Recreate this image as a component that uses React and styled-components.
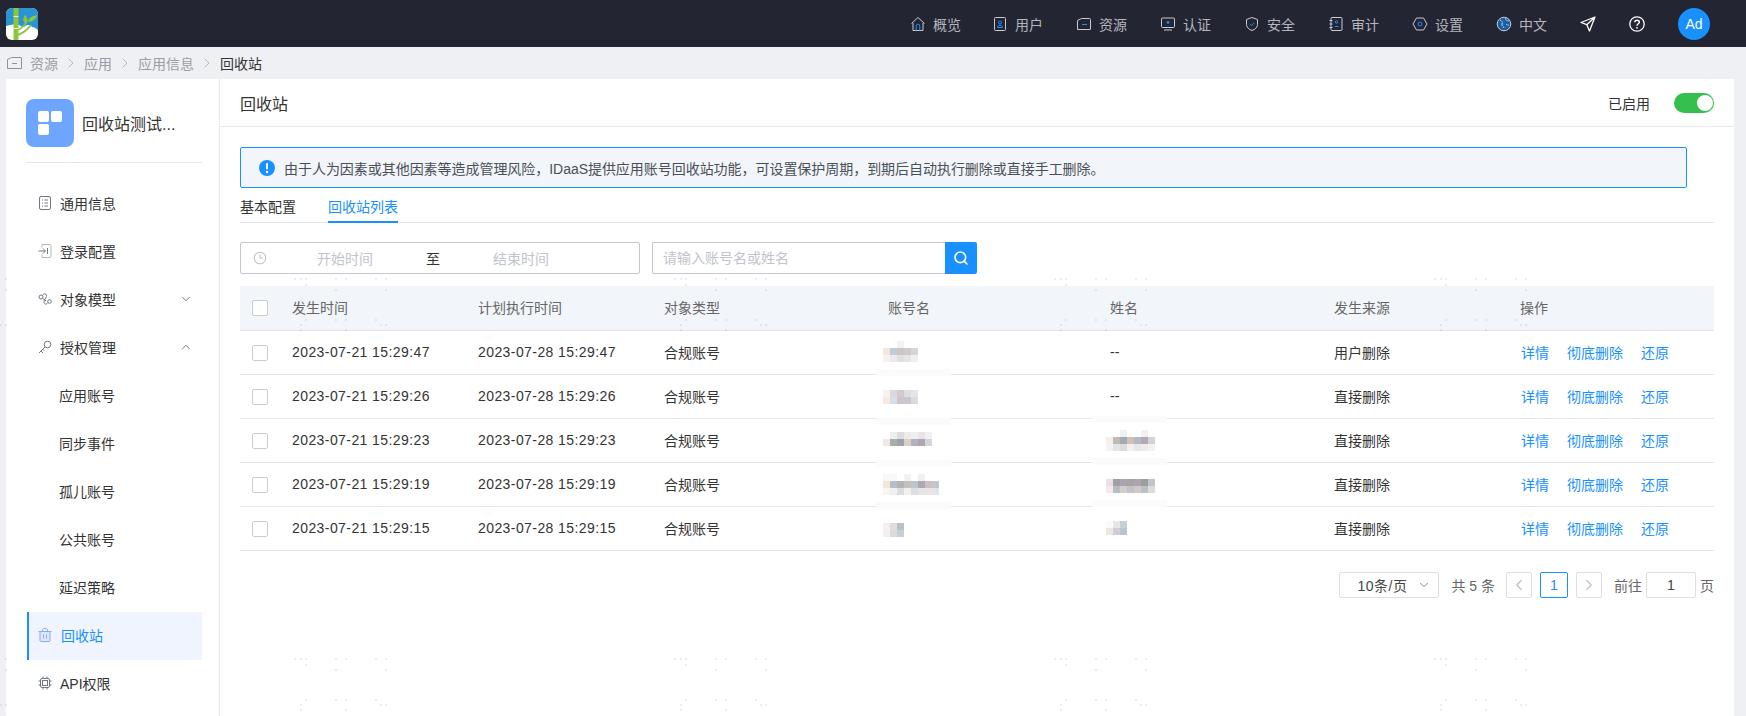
import React from 'react';
import styled, { createGlobalStyle } from 'styled-components';
import { ChevronDown, ChevronUp, ChevronLeft, ChevronRight, ChevronRight as Sep, Search } from 'lucide-react';

const GlobalStyle = createGlobalStyle`
  html, body { margin: 0; padding: 0; height: 716px; overflow: hidden; background: #eff0f4; }
  body, input { font-family: "Liberation Sans", "Noto Sans CJK SC", sans-serif; font-size: 14px; color: #333; }
  * { box-sizing: border-box; }
`;

const BLUE = '#1890ff';

const Page = styled.div`
  position: relative;
  display: flex;
  flex-direction: column;
  width: 1746px;
  height: 716px;
  overflow: hidden;
`;

const TopBar = styled.header`
  flex: none;
  display: flex;
  align-items: center;
  height: 47px;
  padding: 0 36px 0 6px;
  background: #232533;
`;

const Nav = styled.nav`
  display: flex;
  align-items: center;
  gap: 33px;
  margin-left: auto;
`;

const NavItem = styled.a`
  display: flex;
  align-items: center;
  gap: 7px;
  color: #b4b6bd;
  &:first-child { margin-right: -2px; }
  svg { display: block; flex: none; }
`;

const Avatar = styled.div`
  display: flex;
  align-items: center;
  justify-content: center;
  width: 32px;
  height: 32px;
  border-radius: 50%;
  background: ${BLUE};
  color: #fff;
  font-weight: 500;
`;

const Crumbs = styled.div`
  flex: none;
  display: flex;
  align-items: center;
  height: 32px;
  padding-left: 7px;
  color: #9a9ca3;
  svg { display: block; flex: none; }
`;

const Crumb = styled.span`
  margin: 0 5px 0 ${(p) => (p.$first ? 8 : 5)}px;
  color: ${(p) => (p.$current ? '#333' : '#9a9ca3')};
`;

const Main = styled.div`
  flex: 1;
  min-height: 0;
  display: flex;
  padding: 0 12px 0 6px;
`;

const Sidebar = styled.aside`
  flex: none;
  width: 214px;
  padding: 20px 17px 0 21px;
  background: #fff;
  border-right: 1px solid #e8e9ec;
`;

const AppRow = styled.div`
  display: flex;
  align-items: center;
  gap: 8px;
  height: 64px;
  margin-left: -1px;
  padding-bottom: 16px;
  border-bottom: 1px solid #e4e5e8;
  margin-bottom: 17px;
  font-size: 16px;
  color: #333;
  white-space: nowrap;
`;

const AppTile = styled.div`
  display: grid;
  grid-template-columns: 11px 11px;
  grid-auto-rows: 11px;
  gap: 2px;
  align-content: center;
  justify-content: center;
  flex: none;
  width: 48px;
  height: 48px;
  border-radius: 8px;
  background: #6ea6ff;
  i { background: #fff; border-radius: 2px; }
`;

const MenuItem = styled.div`
  display: flex;
  align-items: center;
  height: 48px;
  padding-left: ${(p) => (p.$sub ? 32 : p.$active ? 9 : 11)}px;
  padding-right: 9px;
  padding-bottom: 2px;
  gap: ${(p) => (p.$active ? 9 : 8)}px;
  color: ${(p) => (p.$active ? BLUE : '#333')};
  background: ${(p) => (p.$active ? '#eff4ff' : 'transparent')};
  border-left: ${(p) => (p.$active ? `2px solid ${BLUE}` : 'none')};
  svg { display: block; flex: none; }
`;

const MenuChevron = styled.span`
  margin-left: auto;
  color: #6b6f77;
  svg { display: block; }
`;

const Content = styled.main`
  flex: 1;
  min-width: 0;
  background: #fff;
`;

const PanelHead = styled.div`
  display: flex;
  align-items: center;
  height: 48px;
  padding: 0 20px;
  border-bottom: 1px solid #e8e9ec;
  font-size: 16px;
`;

const StatusLabel = styled.span`
  margin-left: auto;
  margin-right: 24px;
  font-size: 14px;
`;

const Toggle = styled.span`
  position: relative;
  width: 40px;
  height: 20px;
  border-radius: 10px;
  background: #34bf4e;
  &::after {
    content: '';
    position: absolute;
    top: 2px;
    right: 1px;
    width: 16px;
    height: 16px;
    border-radius: 50%;
    background: #fff;
  }
`;

const Body = styled.div`
  padding: 20px 20px 0;
`;

const Notice = styled.div`
  display: flex;
  align-items: center;
  gap: 9px;
  width: 1447px;
  height: 41px;
  padding-left: 18px;
  border: 1px solid ${BLUE};
  border-radius: 2px;
  background: #f2f6fb;
  color: #4a4f57;
  letter-spacing: -0.04px;
  svg { display: block; flex: none; }
`;

const Tabs = styled.div`
  display: flex;
  gap: 32px;
  height: 35px;
  border-bottom: 1px solid #e4e7ed;
`;

const Tab = styled.div`
  height: 35px;
  padding-top: 9px;
  line-height: 20px;
  color: ${(p) => (p.$active ? BLUE : '#333')};
  border-bottom: 2px solid ${(p) => (p.$active ? BLUE : 'transparent')};
`;

const Filters = styled.div`
  display: flex;
  gap: 12px;
  margin-top: 19px;
`;

const DateRange = styled.div`
  display: flex;
  align-items: center;
  width: 400px;
  height: 32px;
  padding-left: 12px;
  border: 1px solid #c4c6cc;
  border-radius: 2px;
  color: #c0c4cc;
  svg { display: block; flex: none; }
`;

const DateSlot = styled.span`
  margin-left: ${(p) => p.$ml}px;
`;

const DateTo = styled.span`
  margin-left: 53px;
  color: #333;
`;

const SearchBox = styled.div`
  display: flex;
  width: 325px;
  height: 32px;
`;

const SearchInput = styled.input`
  flex: 1;
  min-width: 0;
  padding: 0 10px;
  border: 1px solid #c4c6cc;
  border-right: none;
  border-radius: 2px 0 0 2px;
  outline: none;
  &::placeholder { color: #c0c4cc; opacity: 1; }
`;

const SearchButton = styled.button`
  display: flex;
  align-items: center;
  justify-content: center;
  width: 32px;
  padding: 0;
  border: none;
  border-radius: 0 2px 2px 0;
  background: ${BLUE};
  color: #fff;
`;

const COLUMNS = '52px 186px 186px 224px 222px 224px 186px 194px';

const TableHead = styled.div`
  display: grid;
  grid-template-columns: ${COLUMNS};
  align-items: center;
  height: 45px;
  margin-top: 12px;
  background: #f2f6fa;
  border-bottom: 1px solid #e1e4e9;
  color: #666;
`;

const TableRow = styled.div`
  display: grid;
  grid-template-columns: ${COLUMNS};
  align-items: center;
  height: 44px;
  border-bottom: 1px solid #e4e6ea;
`;

const Cell = styled.div`
  position: relative;
  min-width: 0;
  padding-bottom: 2px;
`;

const BlurCell = styled.div`
  position: relative;
  align-self: stretch;
  min-width: 0;
`;

const DateText = styled.span`
  letter-spacing: 0.42px;
`;

const CheckCell = styled.div`
  padding-left: 12px;
`;

const Check = styled.span`
  display: block;
  width: 16px;
  height: 16px;
  border: 1px solid #c8ccd3;
  border-radius: 2px;
  background: #fff;
`;

const Actions = styled.div`
  display: flex;
  gap: 18px;
  margin-left: 1px;
  padding-bottom: 2px;
`;

const ActionLink = styled.a`
  color: ${BLUE};
`;

const RedactionSvg = styled.svg`
  position: absolute;
  left: ${(p) => p.$left}px;
  top: 0;
  overflow: visible;
  pointer-events: none;
`;

const Pager = styled.div`
  display: flex;
  align-items: center;
  justify-content: flex-end;
  margin-top: 21px;
  height: 26px;
  color: #666;
`;

const PageSize = styled.div`
  display: flex;
  align-items: center;
  justify-content: space-between;
  width: 100px;
  height: 26px;
  padding: 0 7px 0 17px;
  border: 1px solid #dcdfe6;
  border-radius: 2px;
  color: #444;
  letter-spacing: 0.5px;
  margin-right: 12px;
  svg { display: block; color: #777; }
`;

const Total = styled.span`
  margin-right: 11px;
`;

const PageButton = styled.span`
  display: flex;
  align-items: center;
  justify-content: center;
  width: ${(p) => (p.$current ? 28 : 26)}px;
  height: 26px;
  margin: ${(p) => (p.$current ? '0 8px' : '0')};
  border: 1px solid ${(p) => (p.$current ? BLUE : '#dcdfe6')};
  border-radius: 2px;
  color: ${(p) => (p.$current ? BLUE : '#bcc0c8')};
`;

const GotoLabel = styled.span`
  margin-left: ${(p) => p.$ml}px;
`;

const GotoInput = styled.span`
  display: flex;
  align-items: center;
  justify-content: center;
  width: 50px;
  height: 26px;
  margin-left: 4px;
  border: 1px solid #dcdfe6;
  border-radius: 2px;
  color: #444;
`;

const Watermark = styled.svg`
  position: absolute;
  inset: 0;
  pointer-events: none;
`;

const Logo = () => (
  <svg width="32" height="32" viewBox="0 0 32 32">
    <defs>
      <clipPath id="logoClip"><rect width="32" height="32" rx="6" /></clipPath>
    </defs>
    <g clipPath="url(#logoClip)">
      <rect width="32" height="32" fill="#fff" />
      <path d="M0 0h32v22c-2-1-3-3-6-3-2-3-6-2-8 0-2 0-3-1-5-2-4-1-9 0-13 1z" fill="#2b93d1" />
      <rect x="7.5" y="0" width="5" height="32" fill="#8cc63f" />
      <path d="M7.5 8.5h5M7.5 20.5h5" stroke="#fff" strokeWidth=".8" />
      <path d="M12 27c5-2 10-6 13-10" stroke="#8cc63f" strokeWidth="2" fill="none" />
      <path d="M12 22c4-2 7-5 8-8" stroke="#8cc63f" strokeWidth="1.6" fill="none" />
      <path d="M19 15c-3-3-1-6-.5-8 3 2 4 5 2 9zM22 14c1-5 5-6 9-7-1 4-4 7-9 7z" fill="#8cc63f" />
    </g>
  </svg>
);

const Ico = ({ children, size = 16 }) => (
  <svg width={size} height={size} viewBox="0 0 16 16" fill="none" stroke="#c9cbd0" strokeWidth="1">
    {children}
  </svg>
);

const NAV = [
  ['概览', <Ico key="h"><path d="M1.5 7.5 8 1.5l6.5 6M3 7v7.5h10V7" /><path d="M6.2 14.5V10a1.8 1.8 0 0 1 3.6 0v4.5" stroke={BLUE} /></Ico>],
  ['用户', <Ico key="u"><rect x="2.5" y="1.5" width="11" height="13" rx="1" /><circle cx="8" cy="6.5" r="1.5" stroke={BLUE} /><path d="M5.5 11.5c0-3 5-3 5 0z" stroke={BLUE} /></Ico>],
  ['资源', <Ico key="r"><path d="M1.5 13.5v-9l4-2h8c.6 0 1 .4 1 1v9.5c0 .3-.3.5-.5.5z" /><path d="M6 8.5h5" stroke={BLUE} /></Ico>],
  ['认证', <Ico key="a"><rect x="1.5" y="2" width="13" height="9.5" rx="1" /><path d="M4 14h8" /><circle cx="8" cy="6.5" r="1.4" fill={BLUE} stroke="none" /></Ico>],
  ['安全', <Ico key="s"><path d="M8 1.5 13.5 3.5v5c0 3-2.5 5-5.5 6-3-1-5.5-3-5.5-6v-5z" /><path d="m5.8 8 1.7 1.6 2.8-2.8" stroke={BLUE} /></Ico>],
  ['审计', <Ico key="c"><rect x="3" y="1.5" width="11" height="13" rx="1" /><path d="M1.5 4.5h3M1.5 8h3M1.5 11.5h3" /><circle cx="8.5" cy="6" r="1.2" stroke={BLUE} /><path d="M6.8 10.5h3.5" stroke={BLUE} /></Ico>],
  ['设置', <Ico key="t"><path d="M4.5 2h7L15 8l-3.500 6h-7L1 8z" /><circle cx="8" cy="8" r="2" stroke={BLUE} /></Ico>],
  ['中文', <Ico key="g"><circle cx="8" cy="8" r="6.800" fill="#1a5f9e" /><path d="M4 4c2 1 3 2 2 4s2 2 2 4M10 2c-1 2 1 3 3 3M10 8c1 1 2 1 3 1" stroke="#9fd0f5" /></Ico>],
];

const SendIcon = () => (
  <svg width="16" height="16" viewBox="0 0 16 16" fill="none" stroke="#fff" strokeWidth="1.300" strokeLinejoin="round">
    <path d="M15 1 1 6.500l5.800 2.200L9.500 15zM6.800 8.700 15 1" />
  </svg>
);

const HelpIcon = () => (
  <svg width="16" height="16" viewBox="0 0 16 16" fill="none" stroke="#fff" strokeWidth="1.300">
    <circle cx="8" cy="8" r="7.200" />
    <path d="M5.800 6.200C5.800 3.500 10.300 3.600 10.300 6.200 10.300 7.800 8 7.700 8 9.800" strokeWidth="1.500" />
    <circle cx="8" cy="11.800" r=".9" fill="#fff" stroke="none" />
  </svg>
);

const FolderIcon = () => (
  <svg width="15" height="14" viewBox="0 0 15 14" fill="none" stroke="#8f9196" strokeWidth="1">
    <path d="M.5 12.500v-9l4-2h9.500c.3 0 .5.200.5.500v10.500z" />
    <path d="M5 7.500h5" />
  </svg>
);

const Side = ({ children, stroke = '#73777f' }) => (
  <svg width="14" height="14" viewBox="0 0 14 14" fill="none" stroke={stroke} strokeWidth="1">
    {children}
  </svg>
);

const MENU = [
  { label: '通用信息', icon: <Side><rect x="1.500" y=".5" width="11" height="13" rx="1.500" /><path d="M4 4h1M6.500 4H10M4 7h1M6.500 7H10M4 10h1M6.500 10H10" /></Side> },
  { label: '登录配置', icon: <Side><path d="M4 .5h8c.5 0 1 .5 1 1v11c0 .5-.5 1-1 1H4v-3M4 3.500v-3" stroke="#b5b7bb" /><path d="M.5 7H7M5 4.500 7.500 7 5 9.500M9.500 4v6" /></Side> },
  { label: '对象模型', chevron: 'down', icon: <Side><circle cx="3" cy="5" r="2" /><circle cx="11.500" cy="9.500" r="1.800" /><path d="M4.500 3.500C6 .5 9.500 2 8.500 4.500L6 9c-.5 2.500 2 4.500 3.500 2M5 6.500 8 9" /></Side> },
  { label: '授权管理', chevron: 'up', icon: <Side><circle cx="9.500" cy="4.500" r="3.300" /><path d="m7 7-6 6M3 11l2 2M4.800 9.300l1.500 1.500" /></Side> },
  { label: '应用账号', sub: true },
  { label: '同步事件', sub: true },
  { label: '孤儿账号', sub: true },
  { label: '公共账号', sub: true },
  { label: '延迟策略', sub: true },
  { label: '回收站', active: true, icon: <Side stroke="#8cabf7"><path d="M.5 3.500h13M4.500 3.500V2c0-1 1-1.500 2.500-1.500S9.500 1 9.500 2v1.500" /><path d="M2 3.500h10v9c0 .5-.5 1-1 1H3c-.5 0-1-.5-1-1z" fill="#dbe6ff" /><path d="M5.500 6.500v4M8.500 6.500v4" /></Side> },
  { label: 'API权限', icon: <Side><rect x="2.500" y="2.500" width="9" height="9" rx="1.500" /><rect x="4.500" y="4.500" width="5" height="5" /><path d="M5 .5v2M9 .5v2M5 11.500v2M9 11.500v2M.5 5h2M.5 9h2M11.500 5h2M11.500 9h2" /></Side> },
];

// blurred-out account and person names, colours sampled cell by cell
const ACCOUNT_BLUR = [
  { y: 10, strip: 38, rows: [[null, null, '#f3f3f3', null, null], ['#f3e6de', '#c3ccd6', '#d0c4c8', '#cdc9cd', '#d3d6dc'], ['#f9f1ec', '#e9ebf0', '#e4dedd', '#e6e4e4', '#eff0f2']] },
  { y: 15, strip: 43, rows: [['#f9f1ec', '#d5dade', '#d4c8cc', '#e0dee0', '#e3e5e9'], ['#f6e8e2', '#d9dde6', '#cfc4c9', '#c9c9cd', '#d9dde2']] },
  { y: 13, strip: 41, rows: [[null, '#eeeeee', '#dcdcdc', '#eee9ea', '#eeeeee', '#e9e4e6', '#f0f0f2'], ['#f0e8e3', '#a9b0ac', '#9aa2ad', '#dccfc6', '#adb3c4', '#aea8ae', '#d3d4da']] },
  { y: 11, strip: 39, rows: [['#faf6f3', '#f4f8fb', null, '#f2f2f2', null, '#f3eff0'], ['#f3e6da', '#b3c1c6', '#b5b2bb', '#c7c1bc', '#bcc5ce', '#aea9af', '#c9c1c3', '#c2c6d0'], ['#faf5f1', '#eef0f4', '#dcdde0', '#f2efec', '#dbdfe2', '#e5e5e5', '#e7e5e5', '#e4e4ea']] },
  { y: 16, rows: [['#f7efec', '#dfdddf', '#b8c2c6'], ['#f6eeec', '#dcdadb', '#c9d0d4']] },
];

const NAME_BLUR = [
  null,
  null,
  { y: 11, strip: -3, rows: [[null, null, '#f1f1f1', null, null, '#f2f0f3'], ['#f7efec', '#bfbab5', '#a2aab3', '#cfc2bb', '#b2b8c6', '#b3aab1', '#d2d2da'], ['#f7f1ef', '#e0e8e6', '#dcdcdc', '#f6efeb', '#e8e7ec', '#ecebee', '#f2f2f4']] },
  { y: 16, strip: -5, rows: [['#efdfe4', '#9ea19e', '#aba3b0', '#a3a6a3', '#aea3b2', '#9c9e9a', '#c1c4cf'], ['#f5e7ec', '#b9bcc3', '#d2cdcd', '#c2c2c8', '#d0c9ca', '#bcbfc8', '#dadcda']] },
  { y: 14, strip: -7, rows: [['#fdfbfa', '#e6e6e6', '#c8cfd2'], ['#efe5e5', '#d2ccd4', '#bac5c9']] },
];

const Redaction = ({ data, left, inset }) => (
  <RedactionSvg $left={left} width="76" height="44">
    {data.strip !== undefined && <rect x="0" y={data.strip} width="75" height="7" fill="#fafbfa" />}
    {data.rows.map((row, r) =>
      row.map((fill, c) =>
        fill ? <rect key={`${r}-${c}`} x={inset + c * 7} y={data.y + r * 7} width="7" height="7" fill={fill} /> : null
      )
    )}
  </RedactionSvg>
);

const ROWS = [
  { at: '2023-07-21 15:29:47', plan: '2023-07-28 15:29:47', name: '--', from: '用户删除' },
  { at: '2023-07-21 15:29:26', plan: '2023-07-28 15:29:26', name: '--', from: '直接删除' },
  { at: '2023-07-21 15:29:23', plan: '2023-07-28 15:29:23', from: '直接删除' },
  { at: '2023-07-21 15:29:19', plan: '2023-07-28 15:29:19', from: '直接删除' },
  { at: '2023-07-21 15:29:15', plan: '2023-07-28 15:29:15', from: '直接删除' },
];

const DOTS = [
  [294, 278], [300, 278], [305, 278], [305, 284], [335, 278], [345, 278], [335, 289], [375, 278], [5, 278], [5, 289],
  [305, 319], [335, 319], [345, 319], [375, 319], [300, 324], [0, 324], [5, 324], [300, 329], [345, 329],
];

const Separator = () => <Sep size={16} strokeWidth={1.4} color="#b4b6bb" />;

export default function App() {
  return (
    <Page>
      <GlobalStyle />
      <TopBar>
        <Logo />
        <Nav>
          {NAV.map(([label, icon]) => (
            <NavItem key={label}>{icon}{label}</NavItem>
          ))}
          <NavItem><SendIcon /></NavItem>
          <NavItem><HelpIcon /></NavItem>
          <Avatar>Ad</Avatar>
        </Nav>
      </TopBar>

      <Crumbs>
        <FolderIcon />
        <Crumb $first>资源</Crumb>
        <Separator />
        <Crumb>应用</Crumb>
        <Separator />
        <Crumb>应用信息</Crumb>
        <Separator />
        <Crumb $current>回收站</Crumb>
      </Crumbs>

      <Main>
        <Sidebar>
          <AppRow>
            <AppTile><i /><i /><i /></AppTile>
            回收站测试...
          </AppRow>
          {MENU.map((item) => (
            <MenuItem key={item.label} $sub={item.sub} $active={item.active}>
              {item.icon}
              {item.label}
              {item.chevron && (
                <MenuChevron>
                  {item.chevron === 'down' ? <ChevronDown size={14} strokeWidth={1.6} /> : <ChevronUp size={14} strokeWidth={1.6} />}
                </MenuChevron>
              )}
            </MenuItem>
          ))}
        </Sidebar>

        <Content>
          <PanelHead>
            回收站
            <StatusLabel>已启用</StatusLabel>
            <Toggle />
          </PanelHead>
          <Body>
            <Notice>
              <svg width="16" height="16" viewBox="0 0 16 16">
                <circle cx="8" cy="8" r="8" fill={BLUE} />
                <rect x="7" y="3" width="2" height="6.500" rx="1" fill="#fff" />
                <circle cx="8" cy="12" r="1.200" fill="#fff" />
              </svg>
              由于人为因素或其他因素等造成管理风险，IDaaS提供应用账号回收站功能，可设置保护周期，到期后自动执行删除或直接手工删除。
            </Notice>
            <Tabs>
              <Tab>基本配置</Tab>
              <Tab $active>回收站列表</Tab>
            </Tabs>
            <Filters>
              <DateRange>
                <svg width="14" height="14" viewBox="0 0 14 14" fill="none" stroke="#c0c4cc" strokeWidth="1.100">
                  <circle cx="7" cy="7" r="5.800" />
                  <path d="M7 3.500V7h3" />
                </svg>
                <DateSlot $ml={50}>开始时间</DateSlot>
                <DateTo>至</DateTo>
                <DateSlot $ml={53}>结束时间</DateSlot>
              </DateRange>
              <SearchBox>
                <SearchInput placeholder="请输入账号名或姓名" />
                <SearchButton><Search size={16} strokeWidth={2.4} /></SearchButton>
              </SearchBox>
            </Filters>

            <TableHead>
              <CheckCell><Check /></CheckCell>
              <Cell>发生时间</Cell>
              <Cell>计划执行时间</Cell>
              <Cell>对象类型</Cell>
              <Cell>账号名</Cell>
              <Cell>姓名</Cell>
              <Cell>发生来源</Cell>
              <Cell>操作</Cell>
            </TableHead>
            {ROWS.map((row, i) => (
              <TableRow key={row.at}>
                <CheckCell><Check /></CheckCell>
                <Cell><DateText>{row.at}</DateText></Cell>
                <Cell><DateText>{row.plan}</DateText></Cell>
                <Cell>合规账号</Cell>
                <BlurCell><Redaction data={ACCOUNT_BLUR[i]} left={-12} inset={7} /></BlurCell>
                {NAME_BLUR[i]
                  ? <BlurCell><Redaction data={NAME_BLUR[i]} left={-18} inset={14} /></BlurCell>
                  : <Cell>{row.name}</Cell>}
                <Cell>{row.from}</Cell>
                <Actions>
                  <ActionLink>详情</ActionLink>
                  <ActionLink>彻底删除</ActionLink>
                  <ActionLink>还原</ActionLink>
                </Actions>
              </TableRow>
            ))}

            <Pager>
              <PageSize>10条/页<ChevronDown size={14} strokeWidth={1.5} /></PageSize>
              <Total>共 5 条</Total>
              <PageButton><ChevronLeft size={18} strokeWidth={1.6} /></PageButton>
              <PageButton $current>1</PageButton>
              <PageButton><ChevronRight size={18} strokeWidth={1.6} /></PageButton>
              <GotoLabel $ml={12}>前往</GotoLabel>
              <GotoInput>1</GotoInput>
              <GotoLabel $ml={4}>页</GotoLabel>
            </Pager>
          </Body>
        </Content>
      </Main>

      <Watermark width="1746" height="716">
        <defs>
          <pattern id="dots" width="380" height="380" patternUnits="userSpaceOnUse">
            {DOTS.map(([x, y]) => <rect key={`${x}-${y}`} x={x} y={y} width="2" height="2" fill="#000" fillOpacity=".07" />)}
          </pattern>
        </defs>
        <rect width="1746" height="716" fill="url(#dots)" />
      </Watermark>
    </Page>
  );
}
